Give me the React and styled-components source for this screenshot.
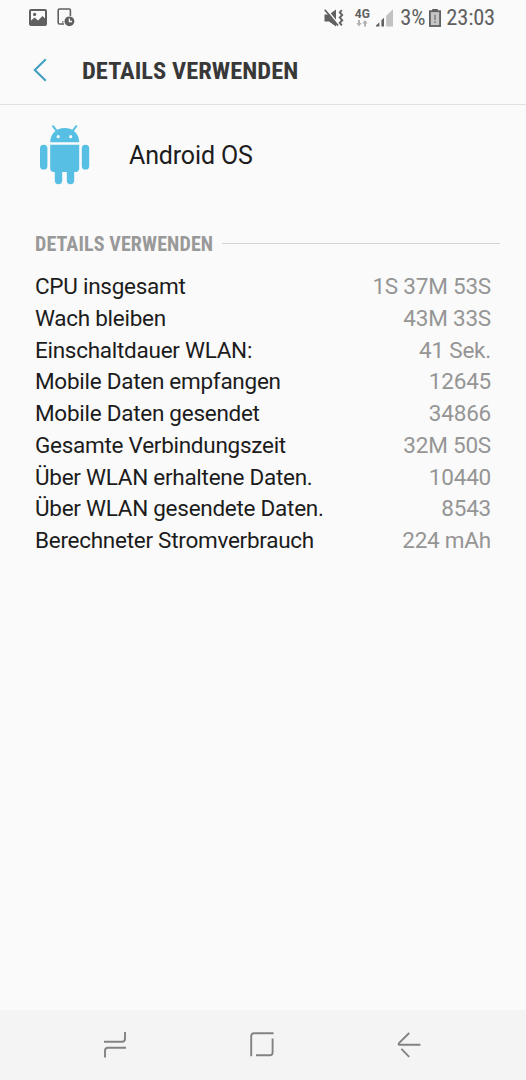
import React from "react";
import styled, { createGlobalStyle } from "styled-components";

const rows = [
	{ label: "CPU insgesamt", value: "1S 37M 53S" },
	{ label: "Wach bleiben", value: "43M 33S" },
	{ label: "Einschaltdauer WLAN:", value: "41 Sek." },
	{ label: "Mobile Daten empfangen", value: "12645" },
	{ label: "Mobile Daten gesendet", value: "34866" },
	{ label: "Gesamte Verbindungszeit", value: "32M 50S" },
	{ label: "Über WLAN erhaltene Daten.", value: "10440" },
	{ label: "Über WLAN gesendete Daten.", value: "8543" },
	{ label: "Berechneter Stromverbrauch", value: "224 mAh" },
];

const PictureIcon = () => (
	<svg width="18" height="17" viewBox="0 0 18 17">
		<rect x="1" y="1" width="16" height="15" rx="1" fill="none" stroke="#606060" strokeWidth="2" />
		<circle cx="5.6" cy="5.4" r="1.6" fill="#606060" />
		<path d="M1 12.5L5.5 8.5L9 11.5L13.5 7L17 10.5V16H1Z" fill="#606060" />
	</svg>
);

const DeviceClockIcon = () => (
	<svg width="18" height="19" viewBox="0 0 18 19">
		<path
			d="M7 16H2.5Q1.2 16 1.2 14.7V2.3Q1.2 1 2.5 1H12.2Q13.4 1 13.4 2.3V8"
			fill="none"
			stroke="#606060"
			strokeWidth="1.6"
		/>
		<rect x="5" y="13.3" width="1.5" height="1.3" fill="#606060" />
		<circle cx="12.4" cy="13.3" r="4.9" fill="#606060" />
		<path d="M12.4 10.5V13.5H15" fill="none" stroke="#fafafa" strokeWidth="1.3" />
	</svg>
);

const MuteVibrateIcon = () => (
	<svg width="20" height="18" viewBox="0 0 20 18">
		<path d="M0.5 5.5H5L12 0.5V17.5L5 12.5H0.5Z" fill="#606060" />
		<path d="M2.2 0L14.6 15.2" stroke="#fafafa" strokeWidth="1.6" />
		<path d="M0.8 0.8L14 16.6" stroke="#606060" strokeWidth="1.7" />
		<path
			d="M17.8 1L15.8 3.4L18.2 6L15.8 8.6L18.2 11.2L15.8 13.8L17.8 16.4"
			fill="none"
			stroke="#606060"
			strokeWidth="1.9"
		/>
	</svg>
);

const DataArrowsIcon = () => (
	<svg width="12" height="7" viewBox="0 0 12 7" fill="#b0b0b0">
		<path d="M2 0H4V3H5.6L3 6.4L0.4 3H2Z" />
		<path d="M8 6.4H10V3.4H11.6L9 0L6.4 3.4H8Z" />
	</svg>
);

const SignalIcon = () => (
	<svg width="18" height="18" viewBox="0 0 18 18">
		<path d="M0 17.5V16.4L3.4 13.2V17.5Z" fill="#606060" />
		<path d="M5.4 17.5V11.3L8 8.8V17.5Z" fill="#606060" />
		<path d="M10.2 17.5V6.7L17 0.3V17.5Z" fill="#c2c2c2" />
	</svg>
);

const BatteryIcon = () => (
	<svg width="12" height="18" viewBox="0 0 12 18">
		<rect x="3.2" y="0" width="5.6" height="3" fill="#606060" />
		<rect x="0.9" y="2.2" width="10.2" height="14.8" fill="#c6c6c6" stroke="#606060" strokeWidth="1.8" />
		<path d="M6 5.7V11M6 12.2V14" stroke="#858585" strokeWidth="1.7" />
	</svg>
);

const ChevronLeft = () => (
	<svg width="14" height="24" viewBox="0 0 14 24">
		<path d="M12.8 1.2L1.8 12L12.8 22.8" fill="none" stroke="#429fc1" strokeWidth="2.1" />
	</svg>
);

const AndroidRobot = () => (
	<svg width="50" height="60" viewBox="0 0 50 60" fill="#57bfe4">
		<path d="M10.2 17.2C10.2 9 16.3 3.1 24.7 3.1S39.2 9 39.2 17.2Z" />
		<path d="M16.3 5.4L13 1.2M33 5.4L36.3 1.2" stroke="#57bfe4" strokeWidth="2" strokeLinecap="round" />
		<circle cx="18.2" cy="11.7" r="1.6" fill="#fafafa" />
		<circle cx="30.7" cy="11.7" r="1.6" fill="#fafafa" />
		<path d="M10.2 19.8H39.2V43.2Q39.2 46.9 35.5 46.9H13.9Q10.2 46.9 10.2 43.2Z" />
		<rect x="0" y="19.8" width="7.4" height="24.8" rx="3.7" />
		<rect x="41.8" y="19.8" width="7.4" height="24.8" rx="3.7" />
		<path d="M14.8 44H22.2V55.5A3.7 3.7 0 0 1 14.8 55.5Z" />
		<path d="M26.8 44H34.2V55.5A3.7 3.7 0 0 1 26.8 55.5Z" />
	</svg>
);

const RecentsIcon = () => (
	<svg width="24" height="26" viewBox="0 0 24 26" fill="none" stroke="#828282" strokeWidth="1.9">
		<path d="M1 9.8H19Q22 9.8 22 6.8V0" />
		<path d="M23 15.7H5Q2 15.7 2 18.7V25.5" />
	</svg>
);

const HomeIcon = () => (
	<svg width="24" height="25" viewBox="0 0 24 25" fill="none" stroke="#828282" strokeWidth="1.9">
		<path d="M1.2 24.3V4Q1.2 1.2 4 1.2H23.6" />
		<path d="M6 23.2H19.8Q22.6 23.2 22.6 20.4V6.4" />
	</svg>
);

const BackIcon = () => (
	<svg width="24" height="26" viewBox="0 0 24 26" fill="none" stroke="#828282" strokeWidth="1.9">
		<path d="M12.2 1L2 11.2Q0.8 12.8 2.6 12.8H23.4" />
		<path d="M4.4 16.9L12.2 24.8" />
	</svg>
);

const App = () => {
	return (
		<>
			<GlobalStyle />
			<Screen>
				<StatusBar>
					<StatusGroup $gap="10px">
						<PictureIcon />
						<DeviceClockIcon />
					</StatusGroup>
					<StatusGroup>
						<MuteVibrateIcon />
						<Network>
							<NetworkType>4G</NetworkType>
							<DataArrowsIcon />
						</Network>
						<SignalIcon />
						<StatusText $left="6px">3%</StatusText>
						<BatteryIcon />
						<StatusText $left="5px">23:03</StatusText>
					</StatusGroup>
				</StatusBar>

				<Header>
					<BackButton aria-label="Zurück">
						<ChevronLeft />
					</BackButton>
					<Title>DETAILS VERWENDEN</Title>
				</Header>

				<AppInfo>
					<AndroidRobot />
					<AppName>Android OS</AppName>
				</AppInfo>

				<SectionHeader>
					<SectionTitle>DETAILS VERWENDEN</SectionTitle>
					<SectionLine />
				</SectionHeader>

				<DetailList>
					{rows.map((row) => (
						<DetailRow key={row.label}>
							<Label>{row.label}</Label>
							<Value>{row.value}</Value>
						</DetailRow>
					))}
				</DetailList>

				<NavBar>
					<RecentsIcon />
					<HomeIcon />
					<BackIcon />
				</NavBar>
			</Screen>
		</>
	);
};

export default App;

const GlobalStyle = createGlobalStyle`
	* {
		box-sizing: border-box;
	}
	body {
		margin: 0;
		background: #fafafa;
		font-family: Roboto, "Liberation Sans", sans-serif;
	}
	svg {
		display: block;
		flex-shrink: 0;
	}
`;

const Screen = styled.div`
	display: flex;
	flex-direction: column;
	width: 526px;
	height: 1080px;
	background: #fafafa;
`;

const StatusBar = styled.div`
	display: flex;
	justify-content: space-between;
	align-items: center;
	height: 36px;
	padding: 0 31px 1px 29px;
`;

const StatusGroup = styled.div`
	display: flex;
	align-items: center;
	gap: ${(props) => props.$gap || "0"};
`;

const Network = styled.div`
	display: flex;
	flex-direction: column;
	align-items: center;
	width: 16px;
	margin: 0 6px 0 10px;
`;

const NetworkType = styled.span`
	font-size: 12px;
	line-height: 11px;
	font-weight: 700;
	color: #606060;
`;

const StatusText = styled.span`
	margin-left: ${(props) => props.$left};
	margin-right: 4px;
	font-family: "Roboto Condensed", Roboto, sans-serif;
	font-stretch: 75%;
	font-size: 22.5px;
	line-height: 35px;
	letter-spacing: -0.2px;
	color: #606060;

	&:last-child {
		margin-right: 0;
	}
`;

const Header = styled.header`
	display: flex;
	align-items: center;
	height: 69px;
	padding-left: 33px;
	border-bottom: 1px solid #e1e1e1;
`;

const BackButton = styled.button`
	display: flex;
	width: 49px;
	padding: 0;
	border: none;
	background: none;
	cursor: pointer;
`;

const Title = styled.h1`
	margin: 2px 0 0;
	font-family: "Roboto Condensed", Roboto, sans-serif;
	font-stretch: 75%;
	font-size: 24.5px;
	font-weight: 700;
	line-height: 32px;
	letter-spacing: 0.03px;
	color: #383838;
`;

const AppInfo = styled.section`
	display: flex;
	align-items: center;
	height: 100px;
	padding-left: 40px;
	gap: 39px;
`;

const AppName = styled.span`
	margin-top: 2px;
	font-size: 25px;
	line-height: 32px;
	letter-spacing: -0.15px;
	color: #1c1c1c;
`;

const SectionHeader = styled.div`
	display: flex;
	align-items: center;
	height: 24px;
	margin: 27px 26px 0 35px;
	gap: 9px;
`;

const SectionTitle = styled.h2`
	margin: 0;
	font-family: "Roboto Condensed", Roboto, sans-serif;
	font-stretch: 75%;
	font-size: 20px;
	font-weight: 700;
	line-height: 24px;
	letter-spacing: 0.12px;
	color: #999;
`;

const SectionLine = styled.div`
	flex: 1;
	height: 1px;
	margin-bottom: 2px;
	background: #d2d2d2;
`;

const DetailList = styled.div`
	flex: 1;
	padding: 15px 35px 0;
`;

const DetailRow = styled.div`
	display: flex;
	justify-content: space-between;
	height: 31.75px;
	font-size: 22.5px;
	line-height: 31.75px;
`;

const Label = styled.span`
	letter-spacing: -0.27px;
	color: #1c1c1c;
`;

const Value = styled.span`
	letter-spacing: -0.22px;
	color: #959595;
`;

const NavBar = styled.nav`
	display: flex;
	justify-content: space-between;
	align-items: center;
	height: 70px;
	padding: 0 105px 1px 103px;
	background: #f4f4f4;
`;
